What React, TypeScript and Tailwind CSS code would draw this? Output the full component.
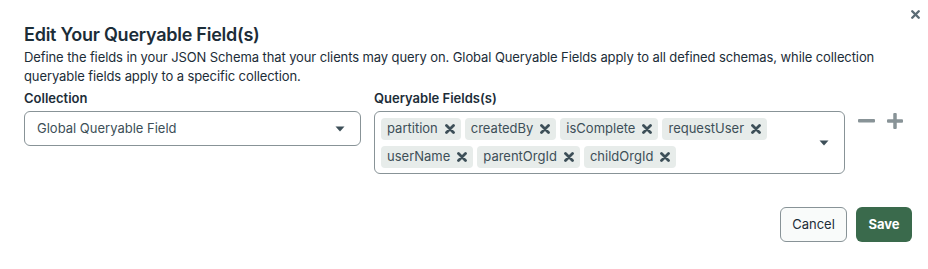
import { X } from 'lucide-react';

const FIELDS = [
  ['partition', 'createdBy', 'isComplete', 'requestUser'],
  ['userName', 'parentOrgId', 'childOrgId'],
];

function Caret() {
  return (
    <svg width="10" height="6" viewBox="0 0 10 6" className="shrink-0">
      <path d="M0.5 0.5h9L5 5.5z" fill="#3d4f58" />
    </svg>
  );
}

function ChipX() {
  return (
    <svg width="10" height="10" viewBox="0 0 10 10" className="shrink-0">
      <path d="M1.5 1.5l7 7M8.5 1.5l-7 7" stroke="#3d4f58" strokeWidth="2.8" strokeLinecap="round" />
    </svg>
  );
}

function Chip({ label }: { label: string }) {
  return (
    <span className="inline-flex h-[22px] items-center gap-[7px] rounded-[4px] bg-[#e7ecea] px-[6px] text-[13px] text-[#3d4f58]">
      {label}
      <ChipX />
    </span>
  );
}

export default function App() {
  return (
    <div
      className="relative h-[269px] w-[928px] bg-white text-[#1c2d38]"
      style={{ fontFamily: 'Inter, "Noto Sans", sans-serif' }}
    >
      <button className="absolute right-[6px] top-[8px] p-0 text-[#5c6c75]">
        <X size={13} strokeWidth={4.5} />
      </button>

      <div className="px-6 pt-[23px]">
        <h2 className="text-[18px] font-semibold leading-[24px] tracking-[-0.25px] text-[#1c2d38]">
          Edit Your Queryable Field(s)
        </h2>
        <p className="mt-[1px] text-[13px] leading-[19px] tracking-[-0.1px] text-[#1c2d38]">
          Define the fields in your JSON Schema that your clients may query on. Global Queryable Fields apply to all defined schemas, while collection queryable fields apply to a specific collection.
        </p>

        <div className="mt-[3px] flex items-start">
          <div className="w-[337px]">
            <label className="block text-[13px] font-semibold leading-[19px]">Collection</label>
            <div className="mt-[3px] flex h-[35px] items-center justify-between rounded-[6px] border border-[#889397] pl-3 pr-[15px] text-[13px] text-[#3d4f58]">
              <span>Global Queryable Field</span>
              <Caret />
            </div>
          </div>

          <div className="ml-[13px] w-[471px]">
            <label className="block text-[13px] font-semibold leading-[19px]">Queryable Fields(s)</label>
            <div className="mt-[3px] flex h-[63px] items-center justify-between rounded-[6px] border border-[#889397] pl-[6px] pr-[15px]">
              <div className="flex flex-col gap-[6px]">
                {FIELDS.map((row, i) => (
                  <div key={i} className="flex gap-[4px]">
                    {row.map((f) => (
                      <Chip key={f} label={f} />
                    ))}
                  </div>
                ))}
              </div>
              <Caret />
            </div>
          </div>

          <div className="ml-[13px] mt-[24px] flex items-center gap-[12px]">
            <svg width="17" height="4" viewBox="0 0 17 4">
              <rect width="17" height="3.5" rx="1" fill="#889397" />
            </svg>
            <svg width="16" height="16" viewBox="0 0 16 16">
              <rect x="6.25" width="3.5" height="16" rx="1" fill="#889397" />
              <rect y="6.25" width="16" height="3.5" rx="1" fill="#889397" />
            </svg>
          </div>
        </div>

        <div className="mt-[33px] flex justify-end gap-[9px]">
          <button className="h-[35px] w-[67px] rounded-[6px] border border-[#889397] bg-[#f9fbfa] text-[13px] text-[#1c2d38]">
            Cancel
          </button>
          <button className="-mr-2 h-[35px] w-[56px] rounded-[6px] bg-[#3a6a4c] text-[13px] font-bold text-white">
            Save
          </button>
        </div>
      </div>
    </div>
  );
}
